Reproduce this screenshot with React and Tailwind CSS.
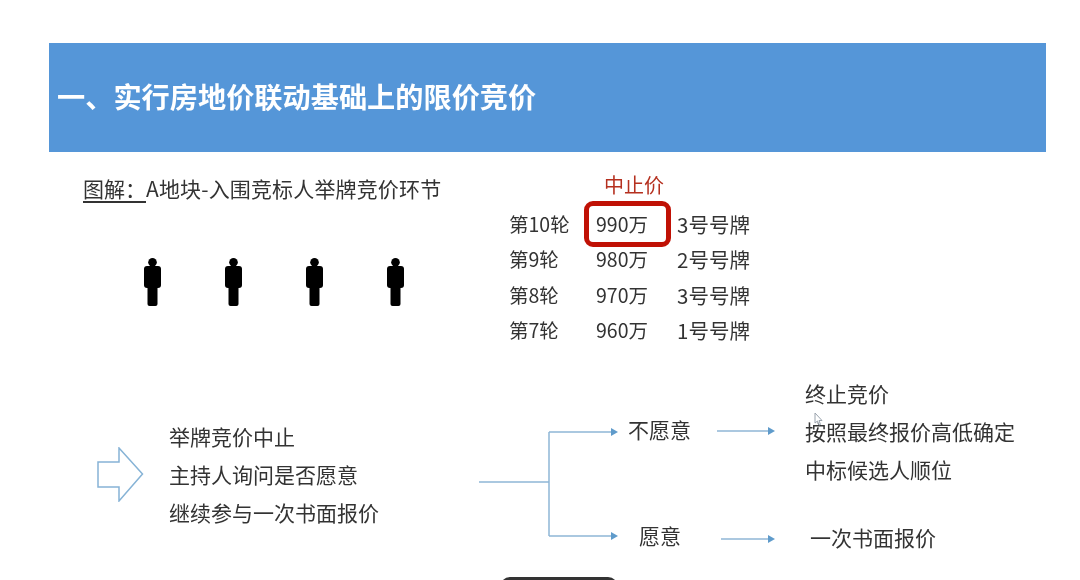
import React from "react";

const font = "font-['Noto_Sans_CJK_SC','Noto_Sans',sans-serif]";

const rounds = [
  { round: "第10轮", price: "990万", bidder: "3号号牌", stopped: true },
  { round: "第9轮", price: "980万", bidder: "2号号牌" },
  { round: "第8轮", price: "970万", bidder: "3号号牌" },
  { round: "第7轮", price: "960万", bidder: "1号号牌" },
];

function Person() {
  return (
    <svg width="17" height="48" viewBox="0 0 17 48" fill="#000">
      <circle cx="8.5" cy="4.300" r="4.300" />
      <rect x="0" y="8" width="17" height="22" rx="3" />
      <rect x="3.500" y="26" width="10" height="22" rx="2" />
    </svg>
  );
}

function FlowArrow({ width }) {
  return (
    <svg width={width} height="10" viewBox={`0 0 ${width} 10`} className="shrink-0">
      <path d={`M0 5H${width - 6}`} stroke="#8fb6d6" strokeWidth="1.5" />
      <path d={`M${width - 7} 1L${width} 5L${width - 7} 9Z`} fill="#5f9bcb" />
    </svg>
  );
}

export default function App() {
  return (
    <div className={`relative w-[1080px] h-[580px] overflow-hidden bg-white pt-[43px] text-[#333] blur-[0.5px] ${font}`}>
      <div className="ml-[49px] w-[997px] h-[109px] bg-[#5596d8] flex items-center pl-[8px] pb-[4px]">
        <h1 className="text-[28.2px] leading-[40px] font-bold text-white">一、实行房地价联动基础上的限价竞价</h1>
      </div>

      <div className="flex h-[220px]">
        <div className="w-[509px] pl-[83px] pt-[23px]">
          <p className="text-[21px] leading-[26px] whitespace-nowrap">
            <span className="underline underline-offset-[4px]">{"图解\uFF1A"}</span>
            <span className="tracking-[0.15px]">A地块-入围竞标人举牌竞价环节</span>
          </p>
          <div className="flex gap-[64px] ml-[61px] mt-[57px]">
            <Person />
            <Person />
            <Person />
            <Person />
          </div>
        </div>

        <div className="pt-[20px]">
          <p className="ml-[95px] text-[20px] leading-[26px] text-[#b5301f]">中止价</p>
          <div className="mt-[8px] grid grid-cols-[87px_81px_100px] auto-rows-[35.5px] items-center text-[19.5px] leading-[26px] whitespace-nowrap">
            {rounds.map((r) => (
              <React.Fragment key={r.round}>
                <span>{r.round}</span>
                <span className="relative">
                  {r.price}
                  {r.stopped && (
                    <span className="absolute left-[-12px] top-[-10px] w-[87px] h-[46px] rounded-[9px] border-[5px] border-[#c01105]" />
                  )}
                </span>
                <span className="text-[20.5px]">{r.bidder}</span>
              </React.Fragment>
            ))}
          </div>
        </div>
      </div>

      <div className="flex items-start text-[21px] leading-[38px] whitespace-nowrap">
        <svg width="47" height="55" viewBox="0 0 47 55" fill="none" className="ml-[97px] mt-[75px] shrink-0">
          <path d="M1 15H22V1L45.5 27L22 54V40H1Z" stroke="#86b3d6" strokeWidth="1.5" />
        </svg>

        <div className="ml-[25px] mt-[45px] w-[310px] shrink-0">
          <p>举牌竞价中止</p>
          <p>主持人询问是否愿意</p>
          <p>继续参与一次书面报价</p>
        </div>

        <svg width="141" height="114" viewBox="0 0 141 114" fill="none" className="mt-[54px] shrink-0">
          <path d="M0 56H70M70 6V110M70 6H133M70 110H133" stroke="#8fb6d6" strokeWidth="1.5" />
          <path d="M132 2L139 6L132 10Z M132 106L139 110L132 114Z" fill="#5f9bcb" />
        </svg>

        <div className="mt-[2px]">
          <div className="flex items-start h-[115px]">
            <p className="ml-[8px] w-[63px] mt-[36px]">不愿意</p>
            <div className="ml-[26px] mt-[52px]">
              <FlowArrow width={58} />
            </div>
            <div className="ml-[30px]">
              <p>终止竞价</p>
              <p>按照最终报价高低确定</p>
              <p>中标候选人顺位</p>
            </div>
          </div>
          <div className="flex items-start mt-[27px]">
            <p className="ml-[19px] w-[42px]">愿意</p>
            <div className="ml-[40px] mt-[18px]">
              <FlowArrow width={54} />
            </div>
            <p className="ml-[35px] mt-[2px]">一次书面报价</p>
          </div>
        </div>
      </div>

      {/* mouse pointer caught in the recording */}
      <svg width="9" height="14" viewBox="0 0 9 14" fill="#fff" className="absolute left-[814px] top-[412px]">
        <path d="M1 1V11L3.5 9L5 13L6.5 12.500L5 8.500H8Z" stroke="#9aa3ad" strokeWidth="1" />
      </svg>

      {/* player bar peeking in at the bottom edge */}
      <div className="absolute left-[500px] top-[577px] w-[118px] h-[12px] rounded-t-[10px] bg-[#333]" />
    </div>
  );
}
